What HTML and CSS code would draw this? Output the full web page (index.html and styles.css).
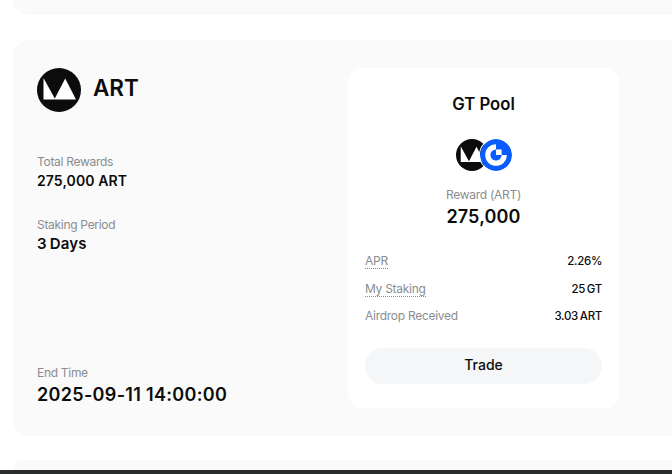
FILE: index.html
```html
<!DOCTYPE html>
<html lang="en">
<head>
    <meta charset="UTF-8">
    <meta name="viewport" content="width=device-width, initial-scale=1.0">
    <title>ART Staking</title>
    <link rel="stylesheet" href="styles.css">
</head>
<body>
    <div class="project project-prev"></div>

    <div class="project">
        <!-- Project info -->
        <div class="info">
            <div class="token">
                <svg class="token-logo" viewBox="0 0 44 44">
                    <circle cx="22" cy="22" r="22" fill="#0c0c0c"/>
                    <path d="M6.5 10V31.5H39L28.2 10.5L17.8 30.5Z" fill="#fff"/>
                </svg>
                <h2 class="token-name">ART</h2>
            </div>
            <div class="item">
                <div class="label">Total Rewards</div>
                <div class="value">275,000 ART</div>
            </div>
            <div class="item">
                <div class="label">Staking Period</div>
                <div class="value period">3 Days</div>
            </div>
            <div class="item end">
                <div class="label">End Time</div>
                <div class="value end-value">2025-09-11 14:00:00</div>
            </div>
        </div>

        <!-- Pool -->
        <div class="pool">
            <h3 class="pool-name">GT Pool</h3>
            <div class="pool-icons">
                <svg class="pool-icon" viewBox="0 0 44 44">
                    <circle cx="22" cy="22" r="22" fill="#0c0c0c"/>
                    <path d="M6.5 10V31.5H39L28.2 10.5L17.8 30.5Z" fill="#fff"/>
                </svg>
                <svg class="pool-icon gt-icon" viewBox="0 0 32 32">
                    <circle cx="16" cy="16" r="16" fill="#0b5cff"/>
                    <path d="M16 7.8A8.2 8.2 0 1 0 24.2 16" fill="none" stroke="#fff" stroke-width="5.2"/>
                    <path d="M16 10.4H21.6V16H16Z" fill="#fff"/>
                </svg>
            </div>
            <div class="reward-label">Reward (ART)</div>
            <div class="reward">275,000</div>
            <div class="rows">
                <div class="row">
                    <span class="row-label tip">APR</span>
                    <span class="row-value">2.26%</span>
                </div>
                <div class="row">
                    <span class="row-label tip">My Staking</span>
                    <span class="row-value">25 GT</span>
                </div>
                <div class="row">
                    <span class="row-label">Airdrop Received</span>
                    <span class="row-value">3.03 ART</span>
                </div>
            </div>
            <button class="btn">Trade</button>
        </div>
    </div>

    <div class="project project-next"></div>
    <div class="bottom-bar"></div>
</body>
</html>
```
FILE: styles.css
```css
* {
    box-sizing: border-box;
}
body {
    margin: 0;
    height: 474px;
    overflow: hidden;
    display: flex;
    flex-direction: column;
    font-family: Inter, "Liberation Sans", sans-serif;
    color: #0c0c0c;
    background: #fff;
}
h2, h3 {
    margin: 0;
    font-weight: 600;
}
.project {
    display: flex;
    flex-shrink: 0;
    height: 396px;
    margin-left: 13px;
    padding: 28px 0 28px 24px;
    background: #fafafa;
    border-radius: 16px 0 0 16px;
}
.project-prev {
    height: 15px;
    margin-bottom: 25px;
    padding: 0;
    border-radius: 0 0 0 16px;
}
.project-next {
    height: 10px;
    margin-top: 24px;
    padding: 0;
    border-radius: 16px 0 0 0;
}
.bottom-bar {
    height: 4px;
    background: #2b2d2c;
}
.info {
    display: flex;
    flex-direction: column;
    width: 311px;
}
.token {
    display: flex;
    align-items: center;
    gap: 12px;
    height: 44px;
    margin-bottom: 41px;
}
.token-logo {
    width: 44px;
    height: 44px;
}
.token-name {
    font-size: 22.5px;
    line-height: 28px;
    padding-bottom: 4px;
}
.item {
    height: 63px;
}
.label {
    font-size: 12px;
    line-height: 18px;
    letter-spacing: -0.3px;
    color: #8a8c8f;
}
.value {
    font-size: 14px;
    line-height: 20px;
    font-weight: 600;
    letter-spacing: 0.1px;
}
.period {
    font-size: 15px;
    word-spacing: -1px;
    letter-spacing: 0.2px;
}
.end {
    height: auto;
    margin-top: 85px;
}
.end-value {
    font-size: 18px;
    line-height: 26px;
    letter-spacing: 0.32px;
}
.pool {
    display: flex;
    flex-direction: column;
    align-items: center;
    width: 271px;
    height: 340px;
    padding: 24px 17px;
    background: #fff;
    border-radius: 14px;
}
.pool-name {
    font-size: 16.7px;
    line-height: 24px;
}
.pool-icons {
    display: flex;
    margin-top: 23px;
}
.pool-icon {
    width: 32px;
    height: 32px;
}
.gt-icon {
    margin-left: -8px;
    border-radius: 50%;
    box-shadow: 0 0 0 1px #fff;
}
.reward-label {
    margin-top: 15px;
    font-size: 12px;
    line-height: 18px;
    letter-spacing: -0.27px;
    color: #8a8c8f;
}
.reward {
    font-size: 18px;
    line-height: 26px;
    font-weight: 600;
    letter-spacing: 0.15px;
}
.rows {
    display: flex;
    flex-direction: column;
    gap: 11px;
    width: 100%;
    margin-top: 23px;
}
.row {
    display: flex;
    justify-content: space-between;
    font-size: 12px;
    line-height: 16.5px;
}
.row-label {
    letter-spacing: -0.28px;
    color: #8a8c8f;
}
.tip {
    height: 16px;
    border-bottom: 1px dotted #8a8c8f;
}
.row-value {
    font-size: 11.5px;
    font-weight: 500;
    letter-spacing: -0.3px;
    word-spacing: -1px;
}
.btn {
    flex-shrink: 0;
    width: 100%;
    height: 36px;
    margin-top: 23px;
    padding: 0 0 2px;
    border: none;
    border-radius: 18px;
    background: #f4f6f8;
    color: #0c0c0c;
    font: 500 14px Inter, "Liberation Sans", sans-serif;
    cursor: pointer;
}
```
